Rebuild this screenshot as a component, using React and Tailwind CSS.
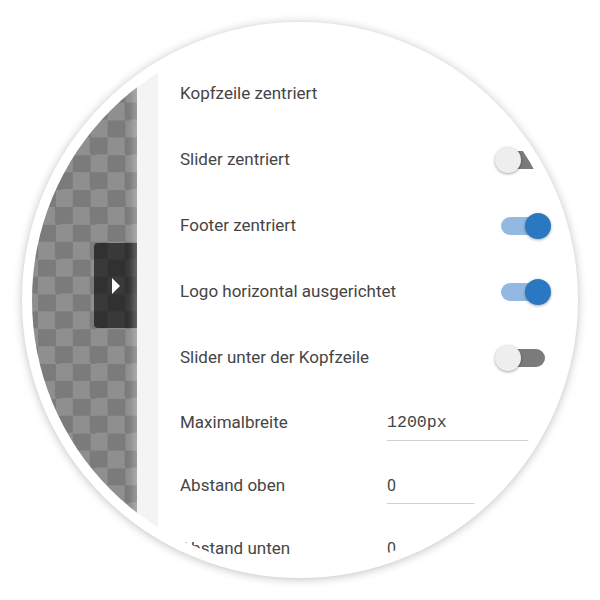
import React from 'react'

const font = { fontFamily: 'Roboto, "Liberation Sans", sans-serif' }

function Toggle({ on }) {
  return (
    <div className={`relative w-[44px] h-[18px] rounded-full ${on ? 'bg-[#93b9e2]' : 'bg-[#7b7b7b]'}`}>
      <div
        className={`absolute top-[-4px] w-[26px] h-[26px] rounded-full shadow-[0_1px_3px_rgba(0,0,0,0.35)] ${
          on ? 'left-[24px] bg-[#2a78c2]' : 'left-[-6px] bg-[#eeeeee]'
        }`}
      />
    </div>
  )
}

function ToggleRow({ label, on }) {
  return (
    <div className="h-[66px] shrink-0 flex items-center justify-between pr-[23px]">
      <span className="text-[17px] text-[#454545]">{label}</span>
      <Toggle on={on} />
    </div>
  )
}

function InputRow({ label, value, width, mono }) {
  return (
    <div className="h-[63px] shrink-0 flex items-center">
      <span className="w-[207px] shrink-0 text-[17px] text-[#454545]">{label}</span>
      <div
        className={`shrink-0 mt-[9px] pb-[7px] border-b border-[#cfcfcf] leading-[20px] text-[#454545] ${width} ${
          mono ? 'text-[16.6px] font-["Liberation_Mono",monospace]' : 'text-[16px]'
        }`}
      >
        {value}
      </div>
    </div>
  )
}

export default function App() {
  return (
    <div className="w-[600px] h-[600px] bg-white flex items-center justify-center" style={font}>
      <div className="w-[556px] h-[556px] rounded-full bg-white p-[10px] shadow-[0_1px_10px_rgba(0,0,0,0.25)]">
        <div className="w-full h-full rounded-full overflow-hidden flex">
          {/* transparent preview area */}
          <div className="w-[105px] shrink-0 flex flex-col items-end pt-[211px] bg-[repeating-conic-gradient(#7b7b7b_0_25%,#8f8f8f_0_50%)] bg-size-[34.8px_34.8px] bg-position-[6px_1px]">
            <div className="w-[43px] h-[85px] rounded-l-[4px] bg-black/60 flex items-center justify-center">
              <svg width="8" height="16" viewBox="0 0 8 16">
                <polygon points="0,0 8,8 0,16" fill="#fff" />
              </svg>
            </div>
          </div>
          <div className="w-[21px] shrink-0 bg-[#f4f4f4] shadow-[-4px_0_6px_rgba(255,255,255,0.25)]" />

          {/* settings panel */}
          <div className="flex-1 bg-white flex flex-col pt-[29px] pl-[22px]">
            <ToggleRow label="Kopfzeile zentriert" on={false} />
            <ToggleRow label="Slider zentriert" on={false} />
            <ToggleRow label="Footer zentriert" on />
            <ToggleRow label="Logo horizontal ausgerichtet" on />
            <ToggleRow label="Slider unter der Kopfzeile" on={false} />
            <InputRow label="Maximalbreite" value="1200px" width="w-[145px]" mono />
            <InputRow label="Abstand oben" value="0" width="w-[94px]" />
            <InputRow label="Abstand unten" value="0" width="w-[94px]" />
          </div>
        </div>
      </div>
    </div>
  )
}
